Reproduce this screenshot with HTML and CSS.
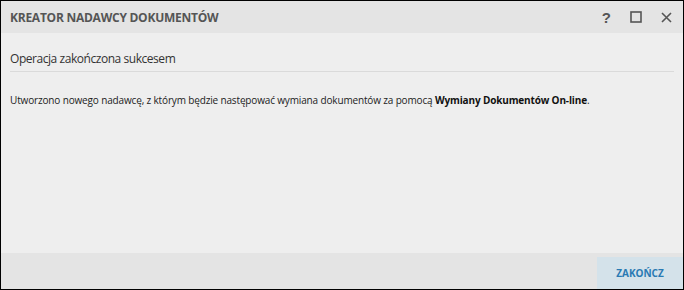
FILE: index.html
```html
<!DOCTYPE html>
<html>
<head>
	<meta charset="utf-8">
	<title>Kreator nadawcy dokumentów</title>
	<link rel="stylesheet" href="styles.css">
</head>
<body>
  <div class="dialog">
    <div class="title_bar">
      <span class="title">KREATOR NADAWCY DOKUMENTÓW</span>
      <div class="title_buttons">
        <span class="help">?</span>
        <svg width="12" height="12" viewBox="0 0 12 12"><rect x="1" y="1" width="10" height="10" fill="none" stroke="#555" stroke-width="1.6"/></svg>
        <svg width="11" height="11" viewBox="0 0 11 11"><path d="M1 1 L10 10 M10 1 L1 10" stroke="#555" stroke-width="1.6"/></svg>
      </div>
    </div>

    <div class="content">
      <h2>Operacja zakończona sukcesem</h2>
      <p>Utworzono nowego nadawcę, z którym będzie następować wymiana dokumentów za pomocą <b>Wymiany Dokumentów On-line</b>.</p>
    </div>

    <div class="footer">
      <button class="finish">ZAKOŃCZ</button>
    </div>
  </div>
</body>
</html>
```

FILE: styles.css
```css
body {
	margin: 0;
	font-family: 'Open Sans', sans-serif;
	color: #222;
}

.dialog {
	width: 682px;
	height: 288px;
	border: 1px solid #000;
	background-color: #eeeeee;
	display: flex;
	flex-direction: column;
}

.title_bar {
	height: 32px;
	background-color: #e4e4e4;
	display: flex;
	align-items: center;
	justify-content: space-between;
	padding: 0 11px 0 9px;
}

.title {
	font-size: 12px;
	font-weight: bold;
	color: #555;
	letter-spacing: -0.25px;
}

.title_buttons {
	display: flex;
	align-items: center;
	gap: 19px;
}

.help {
	font-family: 'Liberation Sans', sans-serif;
	font-size: 15px;
	font-weight: bold;
	color: #555;
}

.content {
	flex: 1;
	padding: 0 9px;
}

h2 {
	font-size: 12px;
	font-weight: normal;
	letter-spacing: -0.45px;
	margin: 17px 0 0;
	padding-bottom: 4px;
	border-bottom: 1px solid #dadada;
	color: #333;
}

p {
	font-size: 10px;
	margin: 21px 0 0;
	letter-spacing: -0.15px;
}

p b {
	color: #111;
}

.footer {
	height: 36px;
	background-color: #e4e4e4;
	display: flex;
	justify-content: flex-end;
	align-items: flex-end;
}

.finish {
	width: 86px;
	height: 32px;
	border: none;
	background-color: #d4e2ea;
	color: #2a7ab3;
	font-family: 'Open Sans', sans-serif;
	font-weight: bold;
	font-size: 10px;
	padding: 0;
}
```
